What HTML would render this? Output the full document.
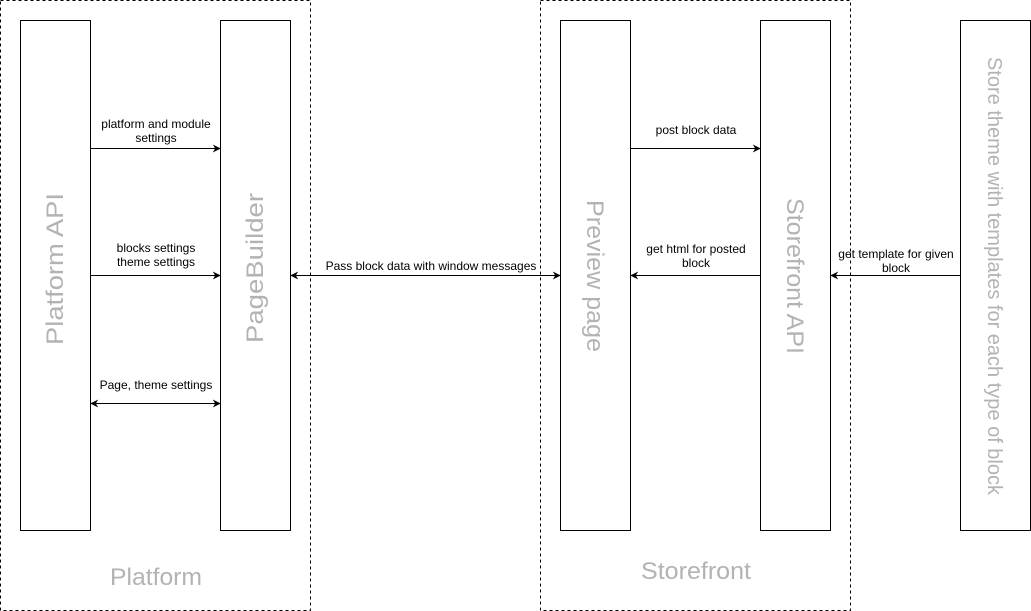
<!DOCTYPE html>
<html><head><meta charset="utf-8"><style>
html,body{margin:0;padding:0;background:#fff;}
svg{display:block;}
text{font-family:"Liberation Sans",Arial,sans-serif;}
.s{font-size:12px;fill:#000;text-anchor:middle;}
.b{font-size:24px;fill:#b3b3b3;text-anchor:middle;}
</style></head><body>
<svg width="1031" height="611" viewBox="0 0 1031 611" xmlns="http://www.w3.org/2000/svg">
<defs>
<marker id="a" viewBox="0 0 10 10" refX="9" refY="5" markerWidth="8" markerHeight="8" orient="auto-start-reverse" markerUnits="userSpaceOnUse">
<path d="M0,0 L10,5 L0,10 L3,5 Z" fill="#000"/>
</marker>
</defs>
<rect x="0.5" y="0.5" width="310" height="610" fill="none" stroke="#000" stroke-dasharray="3,3"/>
<rect x="540.5" y="0.5" width="310" height="610" fill="none" stroke="#000" stroke-dasharray="3,3"/>
<g fill="#fff" stroke="#000">
<rect x="20.5" y="20.5" width="70" height="510"/>
<rect x="220.5" y="20.5" width="70" height="510"/>
<rect x="560.5" y="20.5" width="70" height="510"/>
<rect x="760.5" y="20.5" width="70" height="510"/>
<rect x="960.5" y="20.5" width="70" height="510"/>
</g>
<g stroke="#000" stroke-width="1">
<line x1="91" y1="148.5" x2="220" y2="148.5" marker-end="url(#a)"/>
<line x1="91" y1="275.5" x2="220" y2="275.5" marker-end="url(#a)"/>
<line x1="91" y1="403.5" x2="220" y2="403.5" marker-end="url(#a)" marker-start="url(#a)"/>
<line x1="291" y1="275.5" x2="560" y2="275.5" marker-end="url(#a)" marker-start="url(#a)"/>
<line x1="631" y1="148.5" x2="760" y2="148.5" marker-end="url(#a)"/>
<line x1="760" y1="275.5" x2="631" y2="275.5" marker-end="url(#a)"/>
<line x1="960" y1="275.5" x2="831" y2="275.5" marker-end="url(#a)"/>
</g>
<g class="s">
<text x="156" y="128">platform and module</text>
<text x="156" y="142">settings</text>
<text x="156" y="252">blocks settings</text>
<text x="156" y="266">theme settings</text>
<text x="156" y="389">Page, theme settings</text>
<text x="431" y="270">Pass block data with window messages</text>
<text x="696" y="134">post block data</text>
<text x="696" y="253">get html for posted</text>
<text x="696" y="267">block</text>
<text x="896" y="258">get template for given</text>
<text x="896" y="272">block</text>
</g>
<g class="b">
<text transform="translate(55,269) rotate(-90)" y="8" textLength="152" lengthAdjust="spacingAndGlyphs">Platform API</text>
<text transform="translate(255,268) rotate(-90)" y="8" textLength="150" lengthAdjust="spacingAndGlyphs">PageBuilder</text>
<text transform="translate(595,276) rotate(90)" y="8" textLength="152" lengthAdjust="spacingAndGlyphs">Preview page</text>
<text transform="translate(795,276) rotate(90)" y="8" textLength="156" lengthAdjust="spacingAndGlyphs">Storefront API</text>
<text transform="translate(995,276) rotate(90)" y="7" style="font-size:20px" textLength="438" lengthAdjust="spacingAndGlyphs">Store theme with templates for each type of block</text>
<text x="156" y="585" textLength="92" lengthAdjust="spacingAndGlyphs">Platform</text>
<text x="696" y="579" textLength="110" lengthAdjust="spacingAndGlyphs">Storefront</text>
</g>
</svg>
</body></html>
